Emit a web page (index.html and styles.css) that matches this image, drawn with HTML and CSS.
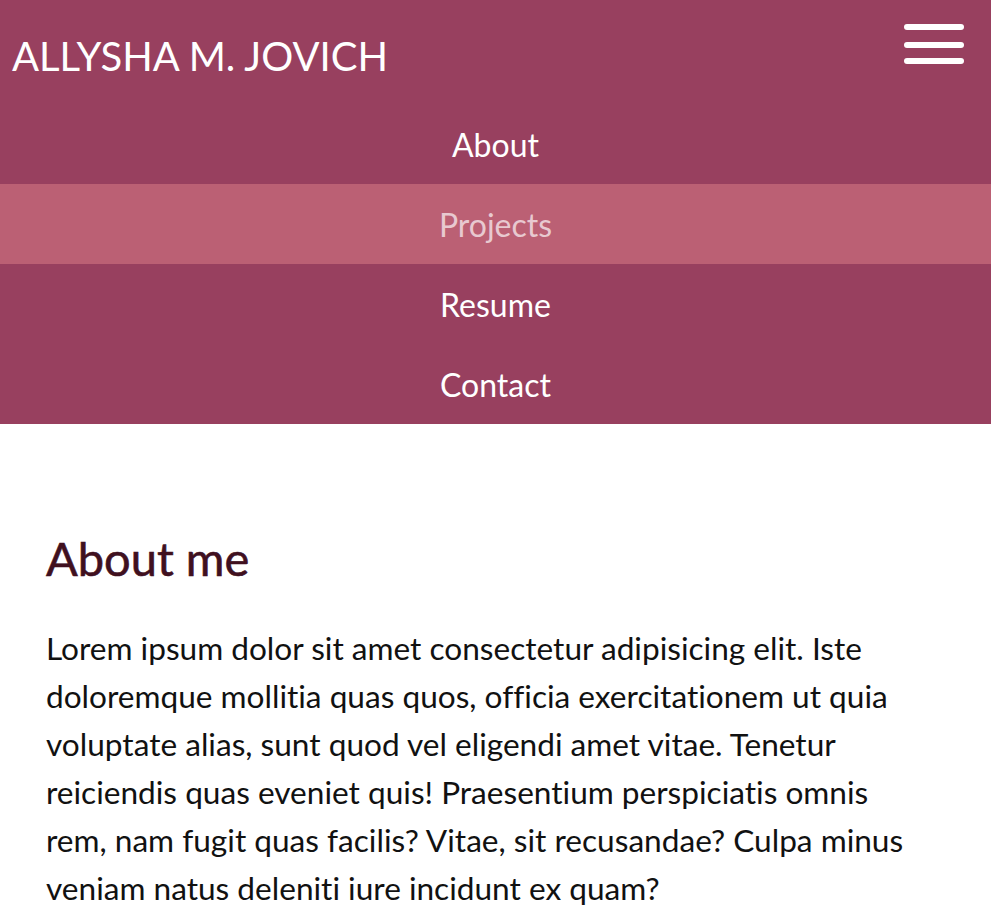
FILE: index.html
```html
<!DOCTYPE html>
<html lang="en">
<head>
<meta charset="utf-8">
<title>Allysha M. Jovich</title>
<link rel="stylesheet" href="styles.css">
</head>
<body>
<header class="site-header">
  <div class="topbar">
    <h1 class="brand">ALLYSHA M. JOVICH</h1>
    <button class="menu-toggle" aria-label="Menu">
      <span class="bar"></span>
      <span class="bar"></span>
      <span class="bar"></span>
    </button>
  </div>
  <nav class="main-nav">
    <a class="nav-link" href="#">About</a>
    <a class="nav-link active" href="#">Projects</a>
    <a class="nav-link" href="#">Resume</a>
    <a class="nav-link" href="#">Contact</a>
  </nav>
</header>
<main class="content">
  <h2 class="section-title">About me</h2>
  <p class="body-text">Lorem ipsum dolor sit amet consectetur adipisicing elit. Iste doloremque mollitia quas quos, officia exercitationem ut quia voluptate alias, sunt quod vel eligendi amet vitae. Tenetur reiciendis quas eveniet quis! Praesentium perspiciatis omnis rem, nam fugit quas facilis? Vitae, sit recusandae? Culpa minus veniam natus deleniti iure incidunt ex quam?</p>
</main>
</body>
</html>
```
FILE: styles.css
```css
* { box-sizing: border-box; }
html, body { margin: 0; padding: 0; }
body {
  font-family: Lato, "Open Sans", sans-serif;
  font-variant-ligatures: none;
  background: #ffffff;
  color: #111111;
}
.site-header {
  background: #98405f;
  color: #ffffff;
}
.topbar {
  height: 104px;
  display: flex;
  align-items: flex-start;
  justify-content: space-between;
  padding: 0 27px 0 12px;
}
.brand {
  margin: 0;
  margin-top: 30px;
  font-size: 40px;
  font-weight: 400;
  line-height: 52px;
  letter-spacing: 0;
}
.menu-toggle {
  margin-top: 24px;
  background: none;
  border: 0;
  padding: 0;
  width: 60px;
  display: flex;
  flex-direction: column;
  gap: 12px;
}
.bar {
  display: block;
  height: 6px;
  width: 60px;
  background: #ffffff;
  border-radius: 3px;
}
.bar + .bar + .bar { margin-top: -2px; }
.main-nav {
  display: flex;
  flex-direction: column;
}
.nav-link {
  height: 80px;
  display: flex;
  align-items: center;
  justify-content: center;
  color: #ffffff;
  text-decoration: none;
  font-size: 32px;
}
.nav-link.active {
  background: #bb6074;
  color: #e8c9d0;
}
.content {
  padding: 104px 60px 0 46px;
}
.section-title {
  margin: 0;
  font-size: 47px;
  font-weight: 400;
  color: #40101f;
  line-height: 60px;
  -webkit-text-stroke: 0.6px #40101f;
}
.body-text {
  margin: 36px 0 0 0;
  font-size: 31.6px;
  line-height: 48px;
  color: #111111;
}
```
